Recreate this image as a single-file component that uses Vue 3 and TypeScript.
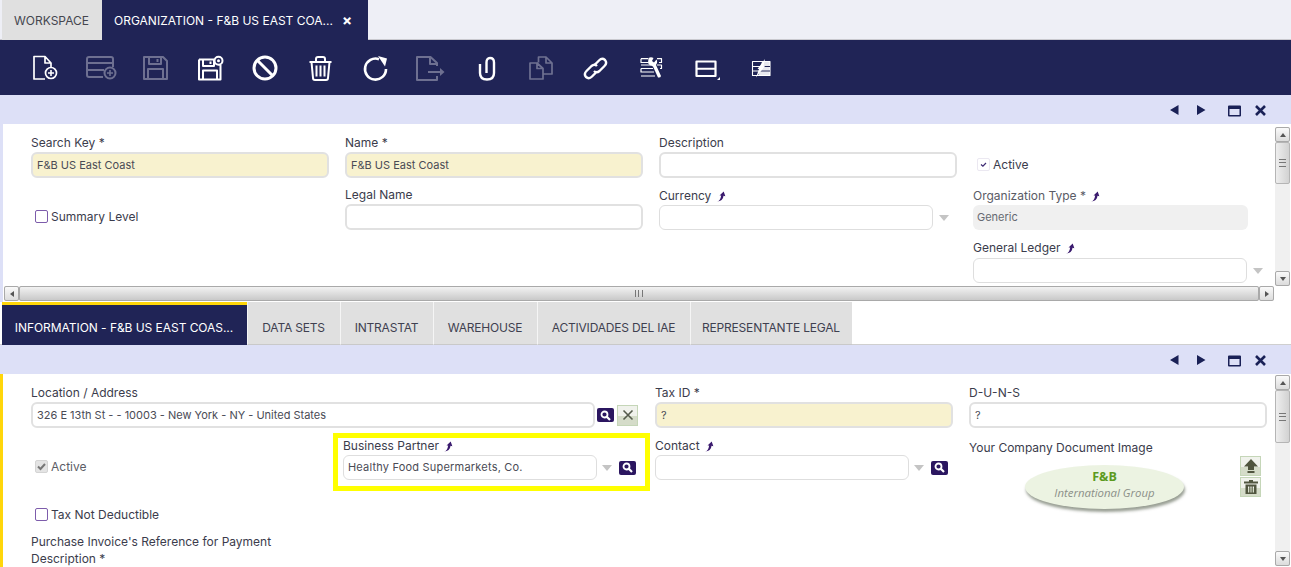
<template>
  <div class="app">
    <div class="main-tabs">
      <div class="main-tab">WORKSPACE</div>
      <div class="main-tab active">
        <span>ORGANIZATION - F&amp;B US EAST COA...</span>
        <span class="tab-close">×</span>
      </div>
    </div>

    <div class="toolbar">
      <button
        v-for="icon in toolbarIcons"
        :key="icon.name"
        type="button"
        class="tool"
        :class="{ off: icon.off }"
        :aria-label="icon.name"
      >
        <svg width="28" height="28" viewBox="0 0 28 28">
          <path v-if="icon.soft" :d="icon.soft" fill="#e8e8ee" />
          <path v-if="icon.line" :d="icon.line" fill="none" stroke="#fff" :stroke-width="icon.sw || 2" stroke-linejoin="round" />
          <path v-if="icon.cut" :d="icon.cut" fill="none" stroke="#202456" stroke-width="1.200" />
          <path v-if="icon.solid" :d="icon.solid" fill="#fff" />
        </svg>
      </button>
    </div>

    <section class="pane top">
      <div class="status">
        <svg width="104" height="14" viewBox="0 0 104 14">
          <path d="M1 7 9.500 2V12Z M28 2 36.500 7 28 12Z" fill="#1a2157" />
          <path d="M60 2.500H71Q72 2.500 72 3.500V12.500Q72 13.500 71 13.500H60Q59 13.500 59 12.500V3.500Q59 2.500 60 2.500Z M60.500 6V12H70.500V6Z" fill="#1a2157" fill-rule="evenodd" />
          <path d="M87 3 96 12M96 3 87 12" stroke="#1a2157" stroke-width="2.600" />
        </svg>
      </div>
      <div class="pane-body">
        <div class="form top-form">
          <div class="field">
            <label>Search Key *</label>
            <div class="input req">F&amp;B US East Coast</div>
          </div>
          <div class="field">
            <label>Name *</label>
            <div class="input req">F&amp;B US East Coast</div>
          </div>
          <div class="field">
            <label>Description</label>
            <div class="input"></div>
          </div>
          <div class="check-cell active-check">
            <span class="tick soft">
              <svg width="9" height="9" viewBox="0 0 9 9"><path d="M2 4.500 3.900 6.200 7 3" fill="none" stroke="#3d2a72" stroke-width="1.200" /></svg>
            </span>
            <span>Active</span>
          </div>

          <div class="check-cell summary-check">
            <span class="tick"></span>
            <span>Summary Level</span>
          </div>
          <div class="field">
            <label>Legal Name</label>
            <div class="input"></div>
          </div>
          <div class="field">
            <label class="low">Currency <svg class="jump" width="11" height="11" viewBox="0 0 10 10"><path d="M1 9.500C3 9 4.200 7.500 4.700 4L3.200 4 7 .5 8.500 4.800 6.800 4.300C6.500 7.500 4.500 9.500 1 9.500Z" fill="#3a1a6e" /></svg></label>
            <div class="combo-row">
              <div class="combo"></div>
              <i class="arrow"></i>
            </div>
          </div>
          <div class="field">
            <label class="muted low">Organization Type * <svg class="jump" width="11" height="11" viewBox="0 0 10 10"><path d="M1 9.500C3 9 4.200 7.500 4.700 4L3.200 4 7 .5 8.500 4.800 6.800 4.300C6.500 7.500 4.500 9.500 1 9.500Z" fill="#3a1a6e" /></svg></label>
            <div class="combo readonly">Generic</div>
          </div>

          <div class="field ledger">
            <label>General Ledger <svg class="jump" width="11" height="11" viewBox="0 0 10 10"><path d="M1 9.500C3 9 4.200 7.500 4.700 4L3.200 4 7 .5 8.500 4.800 6.800 4.300C6.500 7.500 4.500 9.500 1 9.500Z" fill="#3a1a6e" /></svg></label>
            <div class="combo-row over">
              <div class="combo"></div>
              <i class="arrow"></i>
            </div>
          </div>
        </div>
        <div class="vscroll">
          <b class="sb-btn up"></b>
          <b class="sb-thumb top-thumb"><em></em></b>
          <span class="sb-track"></span>
          <b class="sb-btn down"></b>
        </div>
      </div>
      <div class="hscroll">
        <b class="sb-btn left"></b>
        <span class="hbar"><em></em></span>
        <b class="sb-btn right"></b>
      </div>
    </section>

    <div class="sub-tabs">
      <div
        v-for="tab in subTabs"
        :key="tab.label"
        class="sub-tab"
        :class="{ active: tab.active }"
        :style="{ width: tab.width + 'px' }"
      >
        {{ tab.label }}
      </div>
    </div>

    <section class="pane bottom">
      <div class="status">
        <svg width="104" height="14" viewBox="0 0 104 14">
          <path d="M1 7 9.500 2V12Z M28 2 36.500 7 28 12Z" fill="#1a2157" />
          <path d="M60 2.500H71Q72 2.500 72 3.500V12.500Q72 13.500 71 13.500H60Q59 13.500 59 12.500V3.500Q59 2.500 60 2.500Z M60.500 6V12H70.500V6Z" fill="#1a2157" fill-rule="evenodd" />
          <path d="M87 3 96 12M96 3 87 12" stroke="#1a2157" stroke-width="2.600" />
        </svg>
      </div>
      <div class="pane-body">
        <div class="form bottom-form">
          <div class="field location">
            <label>Location / Address</label>
            <div class="combo-row">
              <div class="input wide">326 E 13th St - - 10003 - New York - NY - United States</div>
              <button type="button" class="search" aria-label="Search">
                <svg width="11" height="11" viewBox="0 0 11 11"><circle cx="4.500" cy="4.500" r="3" fill="none" stroke="#fff" stroke-width="1.800" /><path d="M6.800 6.800 10 10" stroke="#fff" stroke-width="2.200" /></svg>
              </button>
              <button type="button" class="clear" aria-label="Clear">
                <svg width="12" height="12" viewBox="0 0 12 12"><path d="M1.500 1.500 10.500 10.500M10.500 1.500 1.500 10.500" stroke="#555b4c" stroke-width="1.600" /></svg>
              </button>
            </div>
          </div>
          <div class="field">
            <label>Tax ID *</label>
            <div class="input req">?</div>
          </div>
          <div class="field">
            <label>D-U-N-S</label>
            <div class="input">?</div>
          </div>

          <div class="check-cell disabled-check">
            <span class="tick grey">
              <svg width="11" height="11" viewBox="0 0 11 11"><path d="M2 5.500 4.500 8 9 3" fill="none" stroke="#777" stroke-width="2" /></svg>
            </span>
            <span>Active</span>
          </div>
          <div class="field partner">
            <label>Business Partner <svg class="jump" width="11" height="11" viewBox="0 0 10 10"><path d="M1 9.500C3 9 4.200 7.500 4.700 4L3.200 4 7 .5 8.500 4.800 6.800 4.300C6.500 7.500 4.500 9.500 1 9.500Z" fill="#3a1a6e" /></svg></label>
            <div class="combo-row">
              <div class="combo spaced">Healthy Food Supermarkets, Co.</div>
              <i class="arrow"></i>
              <button type="button" class="search" aria-label="Search">
                <svg width="11" height="11" viewBox="0 0 11 11"><circle cx="4.500" cy="4.500" r="3" fill="none" stroke="#fff" stroke-width="1.800" /><path d="M6.800 6.800 10 10" stroke="#fff" stroke-width="2.200" /></svg>
              </button>
            </div>
            <div class="highlight"></div>
          </div>
          <div class="field">
            <label>Contact <svg class="jump" width="11" height="11" viewBox="0 0 10 10"><path d="M1 9.500C3 9 4.200 7.500 4.700 4L3.200 4 7 .5 8.500 4.800 6.800 4.300C6.500 7.500 4.500 9.500 1 9.500Z" fill="#3a1a6e" /></svg></label>
            <div class="combo-row">
              <div class="combo"></div>
              <i class="arrow"></i>
              <button type="button" class="search" aria-label="Search">
                <svg width="11" height="11" viewBox="0 0 11 11"><circle cx="4.500" cy="4.500" r="3" fill="none" stroke="#fff" stroke-width="1.800" /><path d="M6.800 6.800 10 10" stroke="#fff" stroke-width="2.200" /></svg>
              </button>
            </div>
          </div>
          <div class="field doc-image">
            <label>Your Company Document Image</label>
            <div class="doc-row">
              <div class="logo">
                <strong>F&amp;B</strong>
                <span>International Group</span>
              </div>
              <div class="doc-actions">
                <button type="button" class="doc-btn" aria-label="Upload">
                  <svg width="16" height="16" viewBox="0 0 16 16"><path d="M8 1 15 8.500H11V12H5V8.500H1Z M4.500 13H11.500V15H4.500Z" fill="#50553f" /></svg>
                </button>
                <button type="button" class="doc-btn" aria-label="Delete">
                  <svg width="16" height="16" viewBox="0 0 16 16"><path d="M6 1H10V2.500H15V4.500H1V2.500H6Z M2.500 5.500H13.500V15H2.500Z M5 7.500V13.500H6.300V7.500Z M7.400 7.500V13.500H8.600V7.500Z M9.700 7.500V13.500H11V7.500Z" fill="#50553f" fill-rule="evenodd" /></svg>
                </button>
              </div>
            </div>
          </div>

          <div class="check-cell no-deduct">
            <span class="tick"></span>
            <span>Tax Not Deductible</span>
          </div>
          <div class="field long-label">
            <label>Purchase Invoice's Reference for Payment Description *</label>
          </div>
        </div>
        <div class="vscroll">
          <b class="sb-btn up"></b>
          <b class="sb-thumb bottom-thumb"><em></em></b>
          <span class="sb-track"></span>
          <b class="sb-btn down"></b>
        </div>
      </div>
    </section>
  </div>
</template>

<script setup lang="ts">
interface ToolIcon {
  name: string
  line?: string
  solid?: string
  soft?: string
  cut?: string
  sw?: number
  off?: boolean
}

const ring = (x: number, y: number, r: number) => `M${x - r} ${y}a${r} ${r} 0 1 0 ${r * 2} 0a${r} ${r} 0 1 0-${r * 2} 0`

const toolbarIcons: ToolIcon[] = [
  {
    name: 'New document',
    line: `M14 25H3V2.500H14L20 9V13M14 2.500V9H20 ${ring(20, 19, 5.5)}`,
    solid: 'M19.200 16h1.600v2.200H23v1.600h-2.200V22h-1.600v-2.200H17v-1.600h2.200Z',
    sw: 1.700,
  },
  {
    name: 'New line',
    line: `M17 23H3Q1 23 1 21V5Q1 3 3 3H25Q27 3 27 5V13M1 9H27M1 16H18 ${ring(24, 19, 5.5)}`,
    solid: 'M23.200 16h1.600v2.200H27v1.600h-2.200V22h-1.600v-2.200H21v-1.600h2.200Z',
    off: true,
  },
  {
    name: 'Save',
    line: 'M3 3H22L26 7V25H3ZM8 3V10H20V3M16.500 5V8M7 25V15H22V25',
    off: true,
  },
  {
    name: 'Save and close',
    line: `M3 5.500H18M24.500 11V25.500H3V5.500M7 5.500V12H18V5.500M14.500 7.500V10M7 25.500V16.500H21V25.500 ${ring(22.5, 6.7, 4)}`,
    solid: ring(22.5, 6.7, 1.5),
  },
  {
    name: 'Undo',
    line: 'M14 3a11 11 0 1 0 0 22a11 11 0 1 0 0-22ZM6.300 6.300 21.700 21.700',
    sw: 3,
  },
  {
    name: 'Delete',
    line: 'M3.500 8H25.500M10 7.500V5Q10 3 12 3H17Q19 3 19 5V7.500M5.500 8 7 24Q7 26 9 26H20Q22 26 22 24L23.500 8M10.500 11.500V22.500M14.500 11.500V22.500M18.500 11.500V22.500',
  },
  {
    name: 'Refresh',
    line: 'M18 5.200A10.500 10.500 0 1 0 25 15',
    solid: 'M17 2 26 4.500 24 12.500Z',
    sw: 2.600,
  },
  {
    name: 'Export',
    line: 'M21 12V9L14.500 3H1V26H21V22M14 3V10H21M12 18H26',
    solid: 'M24 14 28.500 18 24 22Z',
    off: true,
  },
  {
    name: 'Attachment',
    line: 'M15.500 19V8.500Q15.500 4 19 4Q23 4 23 8.500V19Q23 25.500 16 25.500Q9 25.500 9 19V10',
    sw: 2.400,
  },
  {
    name: 'Copy',
    line: 'M12.500 8.500V3H20L26 9V20H17M20 3V9H26M4 9H11L17 14.500V25H4ZM11 9V14.500H17',
    sw: 1.700,
    off: true,
  },
  {
    name: 'Link',
    line: 'M13 11.500 18 6.500Q21 3.500 24 6Q26.500 9 23.500 12L18.500 17Q15.500 19.500 13 17M16 17.500 11 22.500Q8 25.500 5 23Q2.500 20 5.500 17L10.500 12Q13.500 9.500 16 12',
    sw: 2.400,
  },
  {
    name: 'Tools',
    line: 'M5 4.700H12M5 4.700V8.500H12M5 11H15M5 14.500H17M5 14.500V18H18M5 22H19M21 4.700H25.500V8.500H23M21 11H25.500V14.500H24',
    sw: 1.200,
    solid: 'M12.500 4Q15 2.500 17.500 4L16 7 18 8.500 20.500 5.500Q22 8 20 11L25 22Q24.500 24 22 23.500L17 12.500Q13.500 12 12 9Z',
  },
  {
    name: 'Toggle view',
    line: 'M5.500 7.500H24.500V22H5.500ZM5.500 14.750H24.500',
    sw: 2.200,
    solid: 'M26 26H29V23Z',
  },
  {
    name: 'Audit trail',
    soft: 'M16 7.500H24V21.500H12.500Z',
    line: 'M6.500 7.500H24V21.500H6.500ZM6.500 12.500H24M6.500 17H24',
    sw: 1.100,
    cut: 'M15 12.500H24M13 17H24',
    solid: 'M19 5 17.500 12H19L10 23.500 13 15H11.500Z',
  },
]

const subTabs = [
  { label: 'INFORMATION - F&B US EAST COAS...', width: 245, active: true },
  { label: 'DATA SETS', width: 93 },
  { label: 'INTRASTAT', width: 93 },
  { label: 'WAREHOUSE', width: 104 },
  { label: 'ACTIVIDADES DEL IAE', width: 153 },
  { label: 'REPRESENTANTE LEGAL', width: 162 },
]
</script>

<style>
html,
body {
  margin: 0;
  background: #fff;
}
</style>

<style scoped>
.app {
  width: 1291px;
  height: 567px;
  overflow: hidden;
  display: flex;
  flex-direction: column;
  font-family: Inter, "Noto Sans", "Liberation Sans", sans-serif;
  font-size: 12px;
  color: #3f4050;
  background: #fff;
}

.main-tabs {
  height: 40px;
  flex: none;
  display: flex;
  padding-left: 2px;
  background: #eeeff6;
  box-sizing: border-box;
  border-bottom: 1px solid #c9c9cf;
}

.main-tab {
  width: 100px;
  height: 40px;
  box-sizing: border-box;
  flex: none;
  display: flex;
  align-items: center;
  padding-left: 12px;
  background: #e0e0e0;
  font-size: 12px;
  color: #45464f;
}

.main-tab.active {
  width: 266px;
  background: #202456;
  color: #fff;
}

.tab-close {
  margin-left: 9px;
  font-size: 15px;
  font-weight: 700;
}

.toolbar {
  height: 55px;
  flex: none;
  display: flex;
  align-items: center;
  padding-left: 17px;
  background: #202456;
}

.tool {
  width: 55px;
  height: 55px;
  flex: none;
  padding: 0;
  border: 0;
  background: none;
  display: flex;
  align-items: center;
  justify-content: center;
}

.tool svg {
  overflow: visible;
}

.tool.off {
  opacity: 0.35;
}

.pane {
  display: flex;
  flex-direction: column;
  box-sizing: border-box;
  border-left: 3px solid #dde0f7;
}

.pane.top {
  height: 207px;
  flex: none;
}

.pane.bottom {
  flex: 1;
  min-height: 0;
  border-left-color: #ffd60a;
}

.status {
  height: 29px;
  flex: none;
  display: flex;
  align-items: center;
  justify-content: flex-end;
  padding-right: 18px;
  background: #dde0f7;
  margin-left: -3px;
}

.pane-body {
  flex: 1;
  min-height: 0;
  display: flex;
}

.form {
  flex: 1;
  min-width: 0;
  display: grid;
  align-content: start;
  overflow: hidden;
  padding-left: 28px;
}

.top-form {
  grid-template-columns: 298px 298px 298px 275px;
  grid-template-rows: 43px 44px 41px;
  column-gap: 16px;
  row-gap: 9px;
  padding-top: 11px;
}

.bottom-form {
  grid-template-columns: 298px 298px 300px 298px;
  grid-template-rows: 43px 42px 34px 34px;
  column-gap: 14px;
  row-gap: 10px;
  padding-top: 11px;
}

.field {
  min-width: 0;
  position: relative;
  display: flex;
  flex-direction: column;
}

label {
  height: 17px;
  line-height: 15px;
  flex: none;
  white-space: nowrap;
  color: #3b3c4c;
}

label.low {
  line-height: 17px;
}

label.muted {
  color: #5a5b66;
}

.jump {
  margin-left: 1px;
  vertical-align: -2px;
}

.input {
  height: 26px;
  box-sizing: border-box;
  border: 2px solid #e1e1e1;
  border-radius: 6px;
  padding-left: 4px;
  line-height: 23px;
  font-size: 11px;
  color: #4a4b55;
  background: #fff;
}

.input.req {
  background: #f8f2cf;
}

.input.wide {
  width: 564px;
  flex: none;
}

.bottom-form > .field > .input {
  width: 298px;
}

.combo-row {
  display: flex;
  align-items: center;
}

.combo-row.over {
  width: 298px;
}

.combo {
  width: 254px;
  height: 25px;
  flex: none;
  box-sizing: border-box;
  border: 1px solid #dedede;
  border-radius: 6px;
  padding-left: 4px;
  line-height: 23px;
  font-size: 11px;
  color: #4a4b55;
}

.combo.spaced {
  letter-spacing: 0.2px;
}

.top-form .combo-row {
  margin-top: 1px;
}

.top-form .combo-row .combo {
  width: 274px;
}

.combo.readonly {
  width: 275px;
  margin-top: 1px;
  border: 0;
  background: #f0f0f0;
  color: #666a72;
  line-height: 25px;
}

.arrow {
  flex: none;
  width: 0;
  height: 0;
  margin-left: 5px;
  border: 5px solid transparent;
  border-top: 6px solid #c4c4c4;
  border-bottom: 0;
}

.top-form .arrow {
  margin-left: 6px;
}

.search {
  flex: none;
  width: 17px;
  height: 14px;
  margin-left: 7px;
  padding: 0;
  border: 0;
  border-radius: 2px;
  background: #2b1660;
  display: flex;
  align-items: center;
  justify-content: center;
}

.location .search {
  margin-left: 2px;
}

.clear {
  flex: none;
  width: 21px;
  height: 21px;
  margin-left: 3px;
  padding: 0;
  border: 1px solid #c5d6b8;
  background: linear-gradient(#f0f2ec 55%, #d5dcc9 55%);
  display: flex;
  align-items: center;
  justify-content: center;
}

.check-cell {
  display: flex;
  align-items: center;
  gap: 3px;
  padding-left: 4px;
  color: #3b3c4c;
}

.tick {
  width: 13px;
  height: 13px;
  flex: none;
  box-sizing: border-box;
  border: 1px solid #7d5cab;
  border-radius: 2px;
  display: flex;
  align-items: center;
  justify-content: center;
  background: #fff;
}

.tick.soft {
  border-color: #ebe8f1;
}

.tick.grey {
  border-color: #d4d4d4;
  background: #e4e4e4;
}

.active-check {
  padding-top: 15px;
}

.summary-check {
  padding-top: 15px;
}

.disabled-check {
  grid-column: 1;
  padding-top: 14px;
  color: #5c5d66;
}

.no-deduct {
  grid-column: 1;
  grid-row: 3;
  padding-top: 14px;
}

.ledger {
  grid-column: 4;
  grid-row: 3;
}

.location {
  grid-column: 1 / span 2;
}

.doc-image {
  grid-column: 4;
  grid-row: 2 / span 2;
  padding-top: 2px;
}

.long-label {
  grid-column: 1;
  grid-row: 4;
}

.long-label label {
  height: auto;
  line-height: 17px;
  margin-top: -1px;
  white-space: normal;
  width: 250px;
}

.highlight {
  position: absolute;
  left: -10px;
  right: -9px;
  top: -5px;
  height: 48px;
  border: 5px solid #ffff00;
  pointer-events: none;
}

.doc-row {
  display: flex;
  align-items: flex-start;
}

.logo {
  width: 159px;
  height: 44px;
  flex: none;
  box-sizing: border-box;
  padding-bottom: 4px;
  margin: 8px 0 0 56px;
  border-radius: 50%;
  background: #ecf3e2;
  box-shadow: 1px 3px 3px rgba(70, 80, 60, 0.55);
  display: flex;
  flex-direction: column;
  align-items: center;
  justify-content: center;
  gap: 2px;
  line-height: 14px;
}

.logo strong {
  font-family: "Open Sans", "Liberation Sans", sans-serif;
  font-size: 12.500px;
  color: #5c9a1e;
}

.logo span {
  font-family: "Open Sans", "Liberation Sans", sans-serif;
  font-style: italic;
  font-size: 11.400px;
  color: #8b8f88;
}

.doc-actions {
  margin: -1px 0 0 56px;
  display: flex;
  flex-direction: column;
  gap: 1px;
}

.doc-btn {
  width: 21px;
  height: 20px;
  padding: 0;
  border: 1px solid #c5d6b8;
  background: linear-gradient(#f0f2ec 55%, #d5dcc9 55%);
  display: flex;
  align-items: center;
  justify-content: center;
}

.vscroll {
  width: 15px;
  flex: none;
  margin: 3px 1px 0 0;
  display: flex;
  flex-direction: column;
  background: #f0f0f0;
}

.bottom .vscroll {
  margin: 1px 1px 1px 0;
}

.sb-track {
  flex: 1;
}

.sb-btn {
  flex: none;
  display: flex;
  align-items: center;
  justify-content: center;
  box-sizing: border-box;
  border: 1px solid #a9a9a9;
  border-radius: 2px;
  background: linear-gradient(#fafafa, #dcdcdc);
}

.vscroll .sb-btn {
  width: 15px;
  height: 15px;
}

.sb-btn::after {
  content: "";
  width: 0;
  height: 0;
  border: 3px solid transparent;
}

.sb-btn.up::after {
  border-bottom: 4px solid #555;
  border-top: 0;
}

.sb-btn.down::after {
  border-top: 4px solid #555;
  border-bottom: 0;
}

.sb-btn.left::after {
  border-right: 4px solid #555;
  border-left: 0;
}

.sb-btn.right::after {
  border-left: 4px solid #555;
  border-right: 0;
}

.sb-thumb {
  width: 15px;
  flex: none;
  box-sizing: border-box;
  border: 1px solid #b5b5b5;
  border-radius: 2px;
  background: linear-gradient(90deg, #eee, #d2d2d2);
  display: flex;
  align-items: center;
  justify-content: center;
}

.top-thumb {
  height: 42px;
}

.bottom-thumb {
  height: 53px;
}

.sb-thumb em,
.hbar em {
  display: block;
  width: 7px;
  height: 6px;
  border-top: 1px solid #777;
  border-bottom: 1px solid #777;
  background: linear-gradient(transparent 2px, #777 2px, #777 3px, transparent 3px);
}

.hscroll {
  height: 15px;
  flex: none;
  display: flex;
  align-items: stretch;
  margin: 0 17px 1px 1px;
  background: #f0f0f0;
}

.hscroll .sb-btn {
  width: 15px;
}

.hbar {
  flex: 1;
  box-sizing: border-box;
  border: 1px solid #a9a9a9;
  border-radius: 2px;
  background: linear-gradient(#f2f2f2, #c9c9c9);
  display: flex;
  align-items: center;
  justify-content: center;
}

.hbar em {
  width: 6px;
  height: 7px;
  border: 0;
  border-left: 1px solid #777;
  border-right: 1px solid #777;
  background: linear-gradient(90deg, transparent 2px, #777 2px, #777 3px, transparent 3px);
}

.sub-tabs {
  height: 43px;
  flex: none;
  display: flex;
  padding-left: 2px;
  box-sizing: border-box;
  background: #fff;
  border-bottom: 1px solid #cfcfcf;
}

.sub-tab {
  height: 43px;
  flex: none;
  box-sizing: border-box;
  display: flex;
  align-items: center;
  justify-content: center;
  padding-top: 8px;
  padding-right: 1px;
  background: #e0e0e0;
  border-left: 1px solid #f5f5f5;
  border-bottom: 1px solid #c9c9c9;
  font-size: 12px;
  letter-spacing: -0.2px;
  color: #3f4050;
  white-space: nowrap;
}

.sub-tab.active {
  background: #202456;
  color: #fff;
  border: 0;
  border-top: 3px solid #ffd60a;
  padding-top: 4px;
  letter-spacing: -0.05px;
}
</style>
